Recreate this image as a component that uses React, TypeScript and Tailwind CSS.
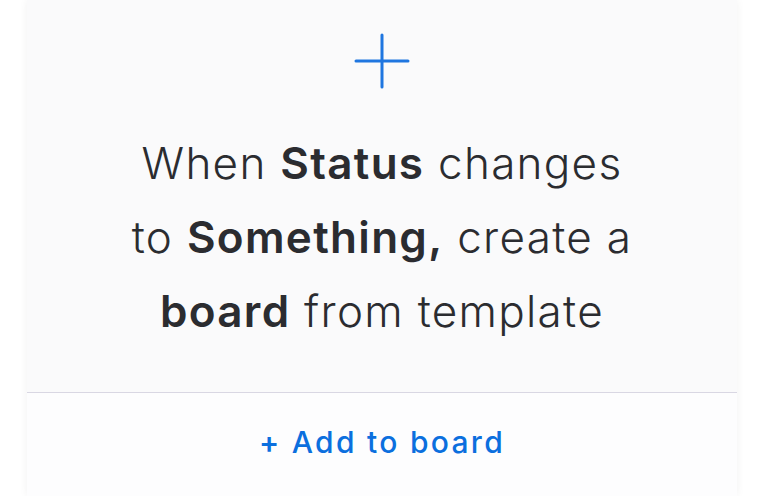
import React from 'react';

const App = () => {
  return (
    <div className="w-[764px] h-[496px] bg-white overflow-hidden flex justify-center" style={{ fontFamily: 'Inter, "Open Sans", sans-serif' }}>
      <div className="w-[710px] h-full flex flex-col bg-[#fdfdfe] shadow-[0_0_8px_rgba(0,0,0,0.06)]">
        <div className="h-[393px] bg-[#fafafb] border-b border-[#d9d7e3] flex flex-col items-center">
          <svg width="56" height="56" viewBox="0 0 56 56" className="mt-[33px]" fill="none" stroke="#1f76e0" strokeWidth="3" strokeLinecap="round">
            <path d="M28 2v52M2 28h52" />
          </svg>
          <p className="mt-[37px] text-center text-[44px] leading-[74px] font-light text-[#2b2c30] tracking-[1.3px]">
            When <span className="font-semibold">Status</span> changes
            <br />
            to <span className="font-semibold">Something,</span> create a
            <br />
            <span className="font-semibold">board</span> from template
          </p>
        </div>
        <div className="flex justify-center pt-[27px]">
          <span className="text-[30px] font-medium text-[#0b6fde] tracking-[2.3px]">
            <span className="font-semibold">+</span> Add to board
          </span>
        </div>
      </div>
    </div>
  );
};

export default App;
